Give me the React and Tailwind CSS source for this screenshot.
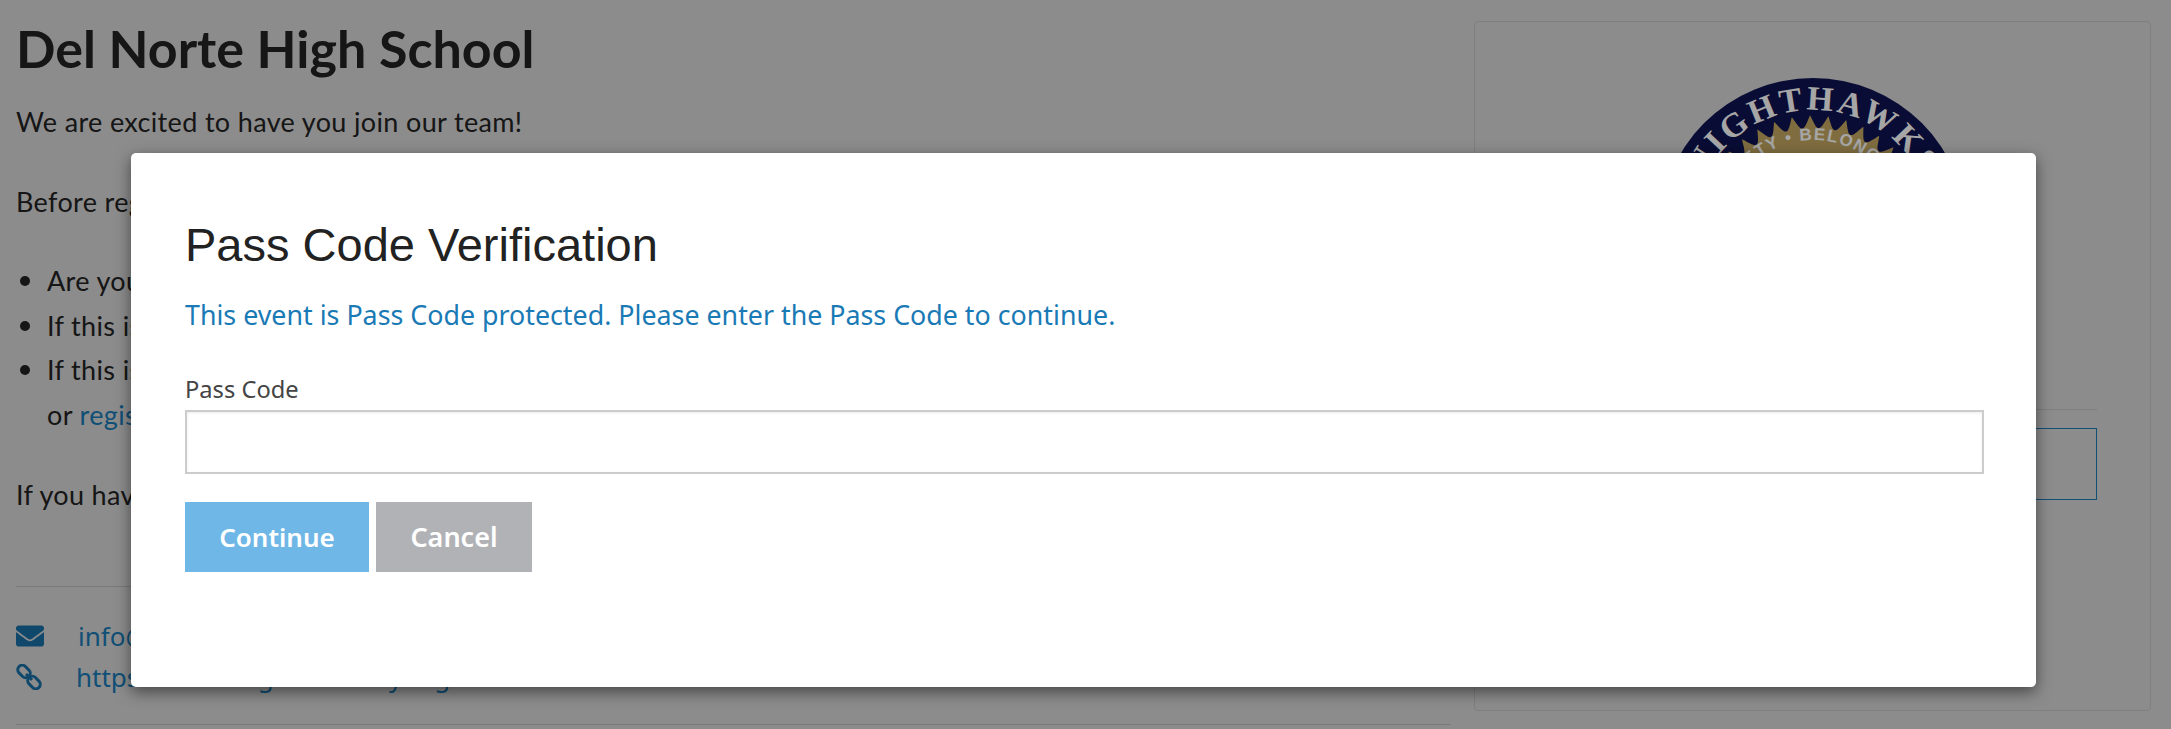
import React from 'react';
import { FaEnvelope } from 'react-icons/fa';

const ChainIcon = ({ className }) => (
  <svg viewBox="0 0 26 26" className={className} fill="none" stroke="currentColor" strokeWidth="3">
    <rect x="1" y="3" width="14" height="9" rx="4.5" transform="rotate(45 8 7.5)" />
    <rect x="11" y="14" width="14" height="9" rx="4.5" transform="rotate(45 18 18.5)" />
    <path d="M10 10l6 6" />
  </svg>
);

// gold ring with pointed tips and round valleys
const scallopPath = () => {
  const pts = [];
  for (let i = 0; i < 720; i++) {
    const t = (i / 720) * Math.PI * 2;
    const r = 104 + 13 * (1 - Math.abs(Math.sin(20 * t + 0.5)));
    pts.push(`${(160 + r * Math.cos(t)).toFixed(2)} ${(160 + r * Math.sin(t)).toFixed(2)}`);
  }
  return `M${pts.join('L')}Z`;
};

const Crest = () => (
  <svg viewBox="0 0 320 320" className="w-[320px] h-[320px]">
    <circle cx="160" cy="160" r="154" fill="#0f1350" />
    <path d={scallopPath()} fill="#c4a863" />
    <defs>
      <path id="crest-outer" d="M38 160 A122 122 0 0 1 282 160" />
      <path id="crest-inner" d="M68 160 A92 92 0 0 1 252 160" />
    </defs>
    <text className="font-['Liberation_Serif',serif] font-bold" fontSize="34" fill="#ffffff">
      <textPath href="#crest-outer" startOffset="50%" textAnchor="middle" letterSpacing="3">NIGHTHAWKS</textPath>
    </text>
    <text className="font-['Liberation_Sans',sans-serif] font-bold" fontSize="17" fill="#ffffff">
      <textPath href="#crest-inner" startOffset="49%" textAnchor="middle" letterSpacing="1.5">SAFETY • BELONGING</textPath>
    </text>
  </svg>
);

const Bullet = ({ children }) => (
  <li className="relative before:absolute before:left-[-27px] before:top-[17px] before:h-[10px] before:w-[10px] before:rounded-full before:bg-[#222]">
    {children}
  </li>
);

const App = () => {
  return (
    <div className="relative w-full h-[729px] overflow-hidden bg-[#d8d8d8] font-['Lato',sans-serif] text-[#222]">
      <div className="flex items-start h-full">
        <div className="w-[1474px] shrink-0 pl-4 pr-6">
          <h1 className="pt-[21px] text-[52px] leading-[54px] font-bold text-[#222]">Del Norte High School</h1>
          <p className="mt-[25px] text-[27px] tracking-[0.35px] leading-[44px]">We are excited to have you join our team!</p>
          <p className="mt-[36px] text-[27px] tracking-[0.35px] leading-[44px]">Before registering, please review the following:</p>
          <ul className="mt-[35px] pl-[31px] text-[27px] tracking-[0.35px] leading-[44.5px]">
            <Bullet>Are you a new or returning member of our team?</Bullet>
            <Bullet>If this is your first time, please create an account</Bullet>
            <Bullet>
              If this is not your first time, please log in
              <br />
              or <span className="text-[#1a7ab5]">register here</span>
            </Bullet>
          </ul>
          <p className="mt-[36px] text-[27px] tracking-[0.35px] leading-[44px]">If you have any questions, please contact us.</p>
          <div className="mt-[69px] border-t border-[#bbb] pt-[27px] text-[#1a7ab5] font-['Noto_Sans',sans-serif] text-[26px]">
            <div className="flex items-center h-[44px]">
              <FaEnvelope className="w-[28px] h-[28px] text-[#1a6fa5]" />
              <span className="ml-[34px]">info@delnorte.org</span>
            </div>
            <div className="flex items-center h-[38px]">
              <ChainIcon className="w-[26px] h-[26px] text-[#1a6fa5]" />
              <span className="ml-[34px]">https://www.registerfamily.org</span>
            </div>
          </div>
          <div className="mt-[28px] border-t border-[#bbb]" />
        </div>
        <div className="mt-[21px] h-[690px] w-[677px] shrink-0 rounded border border-[#c4c4c4] px-[53px] pt-[50px]">
          <div className="flex justify-center h-[337px]"><Crest /></div>
          <div className="border-t border-[#c4c4c4]" />
          <div className="mt-[18px] h-[72px] border border-[#1a7ab5]" />
        </div>
      </div>

      <div className="absolute inset-0 bg-black/35 flex items-start justify-start">
        <div className="mt-[153px] ml-[131px] h-[534px] w-[1905px] rounded-[5px] bg-white px-[54px] pt-[64px] shadow-[0_5px_15px_rgba(0,0,0,0.5)] font-['Noto_Sans',sans-serif]">
          <h2 className="font-['Liberation_Sans',sans-serif] text-[47px] leading-[56px] text-[#222]">Pass Code Verification</h2>
          <p className="mt-[25px] text-[26.8px] leading-[34px] text-[#1a7ab5]">This event is Pass Code protected. Please enter the Pass Code to continue.</p>
          <label className="block mt-[42px] text-[23.7px] leading-[30px] text-[#444]">Pass Code</label>
          <input className="block mt-[6px] w-[1799px] h-[64px] border-2 border-[#ccc] shadow-[inset_0_1px_3px_rgba(0,0,0,0.08)] outline-none" />
          <div className="mt-[28px] flex gap-[7px]">
            <button className="h-[70px] w-[184px] bg-[#6fb7e6] text-[26px] font-semibold text-white">Continue</button>
            <button className="h-[70px] w-[156px] bg-[#b1b2b6] text-[27px] font-semibold text-white">Cancel</button>
          </div>
        </div>
      </div>
    </div>
  );
};

export default App;
